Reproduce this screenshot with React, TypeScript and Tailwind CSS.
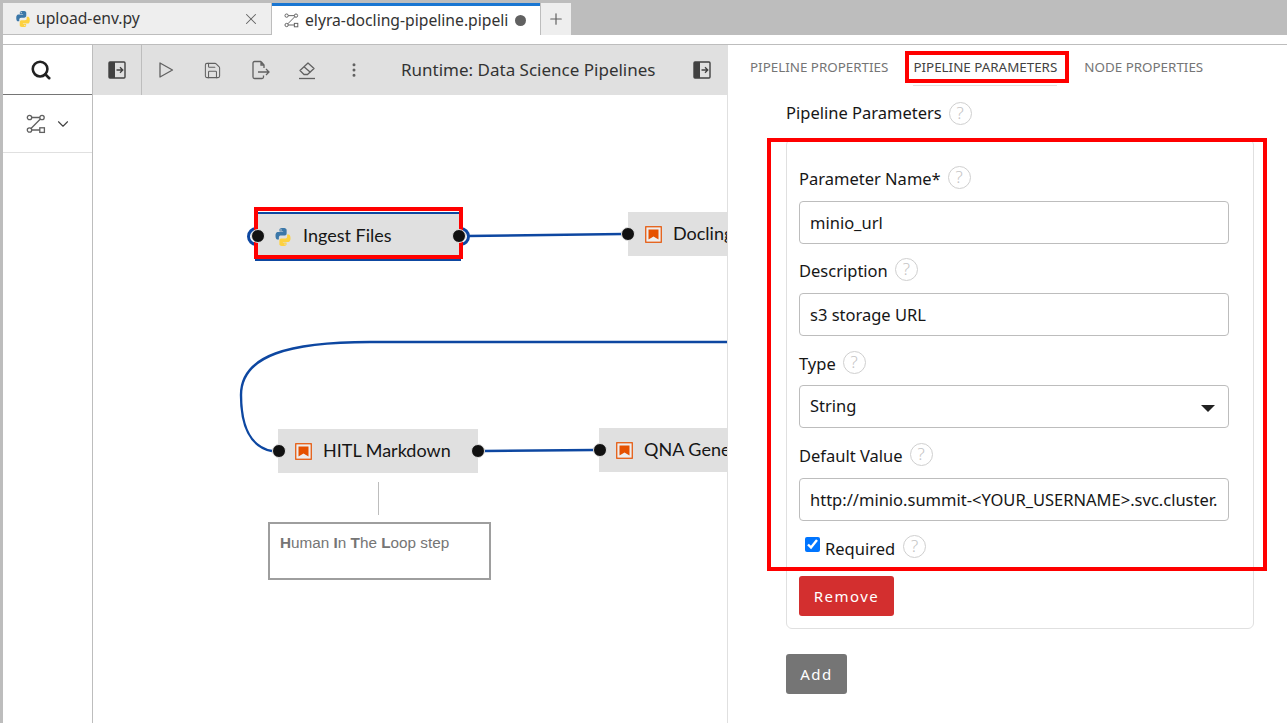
import React from 'react'
import { Search, ChevronDown, X, Plus, Save, EllipsisVertical } from 'lucide-react'

const PythonIcon = ({ size = 18 }: { size?: number }) => {
  const half = 'M8 .8C5 .8 5.2 2.1 5.2 2.1v1.5h2.9V4H4S2 3.8 2 7s1.7 3 1.7 3h1V8.5s-.1-1.7 1.7-1.7h2.9s1.6 0 1.6-1.6V2.5S11.2.8 8 .8zM6.4 1.8a.55.55 0 1 1 0 1.1.55.55 0 0 1 0-1.1z'
  return (
    <svg width={size} height={size} viewBox="0 0 16 16">
      <path d={half} fill="#3b77a8" fillRule="evenodd" />
      <path d={half} fill="#fdd13f" fillRule="evenodd" transform="rotate(180 8 8)" />
    </svg>
  )
}

const PipelineIcon = ({ size = 20 }: { size?: number }) => (
  <svg width={size} height={size} viewBox="0 0 20 20" fill="none" stroke="#616161" strokeWidth="1.3">
    <circle cx="3.5" cy="3.5" r="2.2" />
    <circle cx="16" cy="3.5" r="2.2" />
    <circle cx="3.5" cy="16" r="2.2" />
    <rect x="13.8" y="13.8" width="4.6" height="4.6" />
    <path d="M5.7 3.5h8.1M14.4 5 5 14.5M5.7 16h8.1" />
  </svg>
)

const PanelIcon = () => (
  <svg width="18" height="18" viewBox="0 0 18 18">
    <rect x="1" y="1" width="16" height="16" rx="1" fill="none" stroke="#424242" strokeWidth="1.4" />
    <rect x="1" y="1" width="6" height="16" fill="#424242" />
    <path d="M8.5 9h6M12 6.2 14.8 9 12 11.8" fill="none" stroke="#424242" strokeWidth="1.3" />
  </svg>
)

const PlayIcon = () => (
  <svg width="20" height="20" viewBox="0 0 20 20" fill="none" stroke="#616161" strokeWidth="1.3" strokeLinejoin="round">
    <path d="M4 3 16.500 10 4 17z" />
  </svg>
)

const ExportIcon = () => (
  <svg width="20" height="20" viewBox="0 0 20 20" fill="none" stroke="#616161" strokeWidth="1.3">
    <path d="M11 1.500H4.500A1.500 1.500 0 0 0 3 3v14a1.500 1.500 0 0 0 1.500 1.500H12a1.500 1.500 0 0 0 1.500-1.500v-1.500M11 1.500 14 5v3M11 1.500V5h3" />
    <path d="M8 12h11M16 9l3 3-3 3" />
  </svg>
)

const EraserIcon = () => (
  <svg width="20" height="20" viewBox="0 0 20 20" fill="none" stroke="#616161" strokeWidth="1.3" strokeLinejoin="round">
    <path d="M3 10.500 11 3l6 5.500-6.500 6H7z" />
    <path d="m7 6.800 6.300 5.500" />
    <path d="M2 18.500h16" />
  </svg>
)

const BookmarkIcon = () => (
  <svg width="17" height="17" viewBox="0 0 17 17">
    <rect x=".75" y=".75" width="15.500" height="15.500" fill="#fff" fillOpacity=".45" stroke="#e65100" strokeWidth="1.200" />
    <path d="M3.500 3.500h10v10l-5-3-5 3z" fill="#e65100" />
  </svg>
)

const Help = ({ className = '' }: { className?: string }) => (
  <span className={`inline-flex h-[23px] w-[23px] items-center justify-center rounded-full border border-[#cfcfcf] text-[17px] font-light text-[#c4c4c4] ${className}`}>?</span>
)

const Port = ({ className }: { className: string }) => (
  <span className={`absolute h-[14px] w-[14px] rounded-full border border-[#e0e0e0] bg-[#111] ${className}`} />
)

const FlowNode = ({ label, icon, className }: { label: string; icon: React.ReactNode; className: string }) => (
  <div className={`absolute flex items-center bg-[#e0e0e0] font-['Lato',sans-serif] text-[18px] text-[#161616] ${className}`}>
    {icon}
    <span className="whitespace-nowrap pb-[2px]">{label}</span>
  </div>
)

const Field = ({ label, value, top }: { label: string; value: string; top: string }) => (
  <div className={top}>
    <div className="flex h-[24px] items-center gap-[7px] text-[16.500px] text-[#161616]">
      {label}
      <Help className="-mt-[4px]" />
    </div>
    <input readOnly value={value} className="mt-[10px] h-[43px] w-[430px] rounded-[4px] border border-[#bdbdbd] px-[10px] text-[16.500px] text-[#161616] outline-none" />
  </div>
)

export default function App() {
  return (
    <div className="relative flex h-[723px] w-[1287px] flex-col overflow-hidden bg-white font-['Noto_Sans',sans-serif]">
      {/* tab strip */}
      <div className="flex h-[35px] shrink-0 bg-[#bdbdbd] pl-[3px] pt-[3px]">
        <div className="flex w-[269px] items-center border-b border-r border-[#bdbdbd] bg-[#eeeeee] pl-[11px] pr-[11px] text-[15.700px] text-[#333]">
          <PythonIcon />
          <span className="ml-[4px] flex-1">upload-env.py</span>
          <X size={18} strokeWidth={1.4} color="#616161" />
        </div>
        <div className="flex w-[268px] items-center border-t-[3px] border-[#1976d2] bg-white pl-[12px] pr-[14px] text-[15.700px] text-[#333]">
          <PipelineIcon size={15} />
          <span className="ml-[6px] flex-1 overflow-hidden whitespace-nowrap">elyra-docling-pipeline.pipeli</span>
          <span className="ml-[2px] h-[11px] w-[11px] shrink-0 rounded-full bg-[#616161]" />
        </div>
        <div className="ml-[1px] flex w-[30px] items-center justify-center bg-[#eeeeee]">
          <Plus size={18} strokeWidth={1.600} color="#616161" />
        </div>
      </div>
      <div className="h-[9px] shrink-0 bg-white"><div className="h-full w-[3px] bg-[#bdbdbd]" /></div>

      <div className="flex min-h-0 flex-1">
        <div className="w-[3px] shrink-0 bg-[#bdbdbd]" />
        <div className="flex min-w-0 flex-1 border-t border-[#bdbdbd]">
          {/* left sidebar */}
          <div className="w-[90px] shrink-0 border-r border-[#bdbdbd]">
            <div className="flex h-[50px] items-center border-b border-[#757575] pl-[27px]">
              <Search size={22} strokeWidth={2.800} color="#212121" />
            </div>
            <div className="flex h-[58px] items-center gap-[8px] border-b border-[#e0e0e0] pl-[23px]">
              <PipelineIcon />
              <ChevronDown size={18} strokeWidth={1.500} color="#424242" />
            </div>
          </div>

          {/* pipeline editor */}
          <div className="flex w-[634px] shrink-0 flex-col overflow-hidden">
            <div className="flex h-[50px] shrink-0 items-center bg-[#e0e0e0] text-[#616161]">
              <div className="flex h-full w-[49px] items-center justify-center border-r border-[#bdbdbd]"><PanelIcon /></div>
              <div className="flex items-center">
                <span className="flex w-[47px] justify-center"><PlayIcon /></span>
                <span className="flex w-[47px] justify-center"><Save size={19} strokeWidth={1.300} /></span>
                <span className="flex w-[47px] justify-center"><ExportIcon /></span>
                <span className="flex w-[47px] justify-center"><EraserIcon /></span>
                <span className="flex w-[47px] justify-center"><EllipsisVertical size={18} strokeWidth={2} /></span>
              </div>
              <span className="ml-[24px] whitespace-nowrap text-[17px] text-[#333]">Runtime: Data Science Pipelines</span>
              <span className="ml-[38px]"><PanelIcon /></span>
            </div>
            <div className="relative flex-1">
              <svg className="absolute inset-0" width="634" height="628" fill="none" stroke="#0d47a1" strokeWidth="2.400">
                <path d="M374 141 L530 139" />
                <path d="M179 356 C157 352 148 330 148 300 C148 260 197 247 277 247 L634 247" />
                <path d="M391 356 L501 355" />
              </svg>
              <div className="absolute left-[285px] top-[387px] h-[33px] w-px bg-[#bdbdbd]" />

              <span className="absolute left-[154px] top-[132px] h-[19px] w-[19px] rounded-full border-[3px] border-[#0d47a1]" />
              <span className="absolute left-[358px] top-[132px] h-[19px] w-[19px] rounded-full border-[3px] border-[#0d47a1]" />
              <FlowNode label="Ingest Files" icon={<span className="ml-[16px] mr-[10px]"><PythonIcon size={20} /></span>} className="left-[162px] top-[117px] h-[49px] w-[206px] border-2 border-[#0d47a1]" />
              <div className="absolute left-[161px] top-[112px] h-[52px] w-[209px] border-[4px] border-[#ff0000]" />
              <Port className="left-[158px] top-[134px]" />
              <Port className="left-[359px] top-[134px]" />

              <FlowNode label="Docling Parser" icon={<span className="ml-[17px] mr-[11px]"><BookmarkIcon /></span>} className="left-[535px] top-[117px] h-[44px] w-[200px]" />
              <Port className="left-[528px] top-[132px]" />

              <FlowNode label="HITL Markdown" icon={<span className="ml-[17px] mr-[11px]"><BookmarkIcon /></span>} className="left-[185px] top-[334px] h-[44px] w-[200px]" />
              <Port className="left-[179px] top-[349px]" />
              <Port className="left-[378px] top-[349px]" />

              <FlowNode label="QNA Generation" icon={<span className="ml-[17px] mr-[11px]"><BookmarkIcon /></span>} className="left-[506px] top-[333px] h-[44px] w-[200px]" />
              <Port className="left-[500px] top-[348px]" />

              <div className="absolute left-[175px] top-[427px] h-[58px] w-[223px] border-2 border-[#9e9e9e] bg-white px-[10px] py-[8px] font-['Liberation_Sans',sans-serif] text-[15.300px] text-[#757575]">
                <b>H</b>uman <b>I</b>n <b>T</b>he <b>L</b>oop step
              </div>
            </div>
          </div>

          {/* properties panel */}
          <div className="relative min-w-0 flex-1 border-l border-[#e0e0e0]">
            <div className="flex gap-[25px] pl-[22px] pt-[13px] text-[13.400px] text-[#757575]">
              <span className="h-[28px] leading-[18px]">PIPELINE PROPERTIES</span>
              <span className="h-[28px] border-b border-[#e0e0e0] leading-[18px] text-[#424242]">PIPELINE PARAMETERS</span>
              <span className="ml-[2px] h-[28px] leading-[18px]">NODE PROPERTIES</span>
            </div>
            <div className="ml-[58px] mt-[15px] flex h-[24px] items-center gap-[7px] text-[16.500px] text-[#161616]">
              Pipeline Parameters
              <Help />
            </div>
            <div className="ml-[58px] mt-[14px] h-[490px] w-[468px] rounded-[6px] border border-[#e0e0e0] px-[12px] pt-[1px]">
              <Field label="Parameter Name*" value="minio_url" top="mt-[26px]" />
              <Field label="Description" value="s3 storage URL" top="mt-[15px]" />
              <div className="mt-[16px] flex h-[24px] items-center gap-[7px] text-[16.500px] text-[#161616]">Type<Help className="-mt-[4px]" /></div>
              <div className="relative mt-[9px]">
                <select className="h-[43px] w-[430px] appearance-none rounded-[4px] border border-[#bdbdbd] bg-white px-[10px] text-[16.500px] text-[#161616] outline-none">
                  <option>String</option>
                </select>
                <svg className="absolute left-[402px] top-[20px]" width="14" height="7" viewBox="0 0 14 7"><path d="M0 0h14L7 7z" fill="#212121" /></svg>
              </div>
              <Field label="Default Value" value="http://minio.summit-<YOUR_USERNAME>.svc.cluster.local:9000" top="mt-[16px]" />
              <label className="mt-[16px] flex h-[24px] items-center text-[16.500px] text-[#161616]">
                <input type="checkbox" checked readOnly className="ml-[6px] -mt-[9px] h-[15px] w-[15px] accent-[#0075ff]" />
                <span className="ml-[5px]">Required</span>
                <Help className="ml-[8px] -mt-[6px]" />
              </label>
              <button className="mt-[15px] h-[40px] w-[95px] rounded-[3px] bg-[#d32f2f] text-[15px] tracking-[1.500px] text-white">Remove</button>
            </div>
            <button className="ml-[58px] mt-[25px] h-[40px] w-[61px] rounded-[3px] bg-[#757575] text-[15px] tracking-[1.500px] text-white">Add</button>
          </div>
        </div>
      </div>

      {/* red annotation boxes */}
      <div className="absolute left-[905px] top-[51px] h-[32px] w-[164px] border-[4px] border-[#ff0000]" />
      <div className="absolute left-[767px] top-[138px] h-[433px] w-[500px] border-[4px] border-[#ff0000]" />
    </div>
  )
}
